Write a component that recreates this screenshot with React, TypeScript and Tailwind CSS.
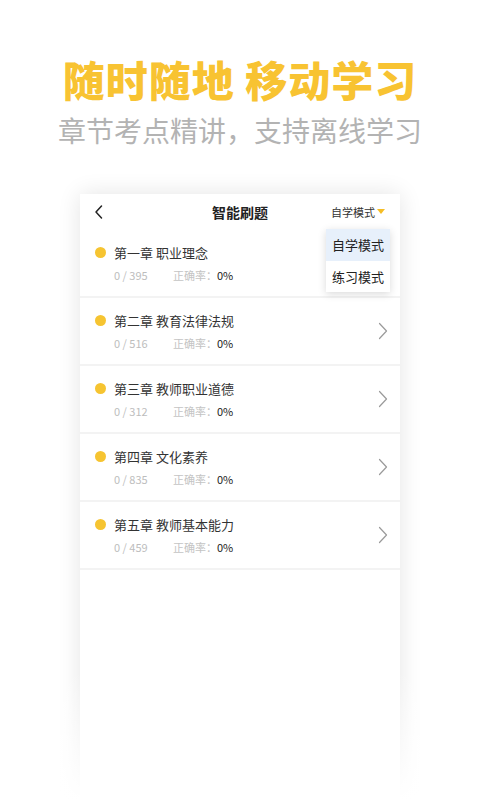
const chapters = [
  { title: '第一章 职业理念', total: 395 },
  { title: '第二章 教育法律法规', total: 516 },
  { title: '第三章 教师职业道德', total: 312 },
  { title: '第四章 文化素养', total: 835 },
  { title: '第五章 教师基本能力', total: 459 },
];

function Chevron() {
  return (
    <svg width="10" height="18" viewBox="0 0 10 18" fill="none">
      <path d="M1.5 1.5L8.5 9L1.5 16.5" stroke="#9a9a9a" strokeWidth="1.2" strokeLinecap="round" strokeLinejoin="round" />
    </svg>
  );
}

export default function App() {
  return (
    <div
      className="relative w-[480px] h-[800px] bg-white overflow-hidden flex flex-col items-center"
      style={{ fontFamily: '"Noto Sans CJK SC", "Noto Sans", sans-serif' }}
    >
      <h1 className="mt-[54px] text-[42px] leading-[50px] font-black text-[#f8c332] tracking-[1px]">随时随地 移动学习</h1>
      <p className="mt-[8px] text-[28px] leading-[36px] text-[#b3b3b3]">章节考点精讲，支持离线学习</p>

      {/* phone screen */}
      <div className="relative mt-[46px] w-[320px] h-[620px] bg-white shadow-[0_0_22px_rgba(0,0,0,0.11)] shrink-0">
        {/* header */}
        <div className="relative h-[36px] flex items-center px-[14px]">
          <svg width="10" height="16" viewBox="0 0 10 16" fill="none">
            <path d="M7.5 2L2 8L7.5 14" stroke="#222" strokeWidth="1.5" strokeLinecap="round" strokeLinejoin="round" />
          </svg>
          <div className="absolute left-0 right-0 text-center text-[14px] font-bold text-[#222] pointer-events-none">智能刷题</div>
          <div className="ml-auto flex items-center gap-[2px] text-[11px] text-[#333] pr-[1px]">
            <span>自学模式</span>
            <svg width="8" height="6" viewBox="0 0 8 6">
              <path d="M0 0H8L4 5Z" fill="#f5bd25" />
            </svg>
          </div>
        </div>

        {/* list */}
        <div className="flex flex-col">
          {chapters.map((c, i) => (
            <div key={i} className="h-[68px] border-b-2 border-[#f3f3f3] flex items-center pl-[15px] pr-[12px]">
              <div className="flex-1 flex flex-col">
                <div className="flex items-center gap-[8px]">
                  <span className="w-[11px] h-[11px] rounded-full bg-[#f6c431]" />
                  <span className="text-[13px] leading-[16px] text-[#333]">{c.title}</span>
                </div>
                <div className="mt-[7px] pl-[19px] flex items-center text-[11px] leading-[14px]">
                  <span className="w-[59px] text-[#bdbdbd]">0 / {c.total}</span>
                  <span className="text-[#c4c4c4]">正确率：</span>
                  <span className="text-[#222]">0%</span>
                </div>
              </div>
              <Chevron />
            </div>
          ))}
        </div>

        {/* dropdown */}
        <div className="absolute top-[35px] right-[10px] w-[64px] bg-white shadow-[0_2px_8px_rgba(0,0,0,0.15)] text-[13px] text-[#222]">
          <div className="h-[32px] flex items-center justify-center bg-[#e7f0fb]">自学模式</div>
          <div className="h-[31px] flex items-center justify-center">练习模式</div>
        </div>
      </div>

      {/* bottom fade */}
      <div className="absolute left-0 right-0 bottom-0 h-[130px] bg-gradient-to-b from-white/0 to-white pointer-events-none" />
    </div>
  );
}
